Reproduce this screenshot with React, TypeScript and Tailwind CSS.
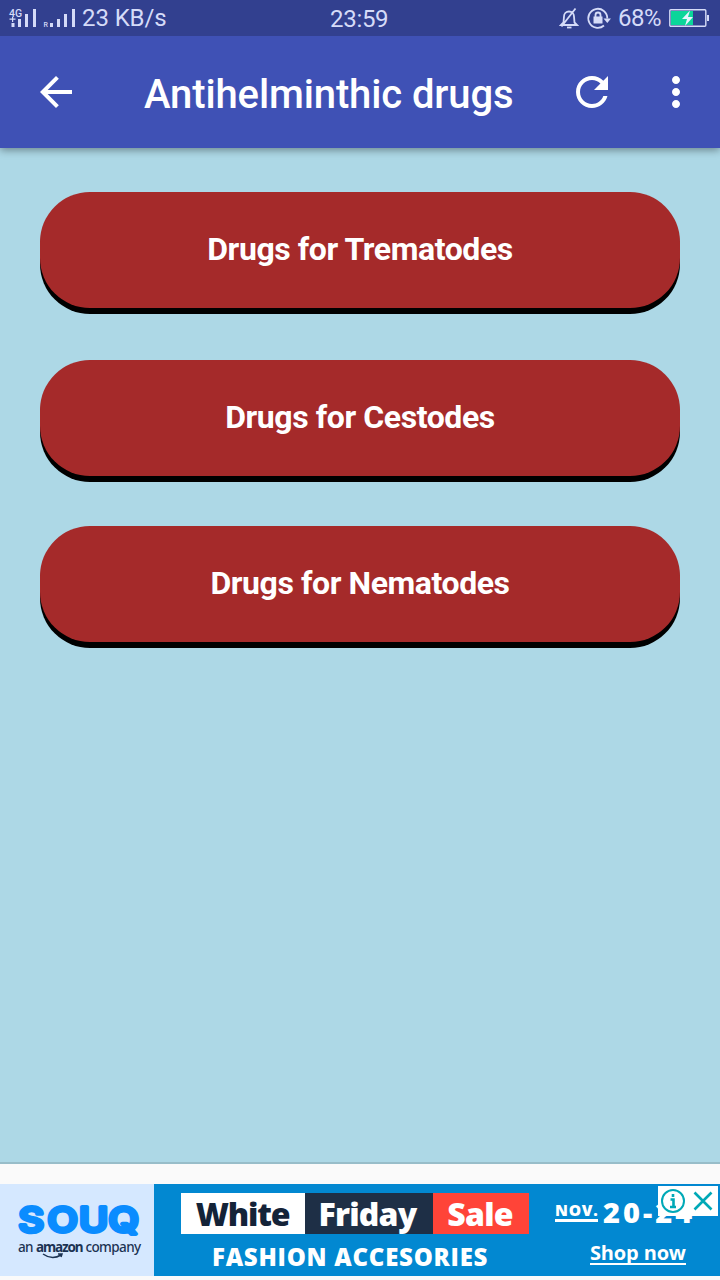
import { ReactNode } from "react";

const drugGroups = [
  { id: "trematodes", label: "Drugs for Trematodes", spacing: "mb-[52px]" },
  { id: "cestodes", label: "Drugs for Cestodes", spacing: "mb-[50px]" },
  { id: "nematodes", label: "Drugs for Nematodes", spacing: "" },
];

function StatusBar() {
  return (
    <div className="relative flex h-9 items-center bg-[#32408f] text-2xl leading-9 text-[#d5dbf8]">
      <svg width="68" height="36" viewBox="0 0 68 36" className="ml-2 shrink-0" fill="currentColor">
        <text x="1" y="16.500" fontSize="10.500" fontWeight="500">4G</text>
        <path d="M1.500 18.500h6v1.200h-6zM4 17h1.200v5h-1.200zM3.500 23h3v4h-3zM10 19h3v8h-3zM17 14h3v13h-3zM25 9h3v18h-3z" />
        <text x="35.500" y="27" fontSize="7" fontWeight="500">R</text>
        <path d="M42 23h3v4h-3zM49 19h3v8h-3zM56 14h3v13h-3zM64 9h3v18h-3z" />
      </svg>
      <span className="ml-1.5 tracking-[-0.1px]">23 KB/s</span>
      <span className="absolute left-[330px] top-px tracking-[-0.3px]">23:59</span>
      <div className="ml-auto flex items-center pr-[11px]">
        <svg width="20" height="24" viewBox="0 0 20 24" fill="none" stroke="currentColor" strokeWidth="1.800">
          <path d="M4.500 16.500l.5-6a5 5 0 0 1 10 0l.5 6 2.500 2.500h-16zM2.500 20.500L16.500 2.500" />
          <path d="M8 21.500h4.500" />
        </svg>
        <svg width="26" height="24" viewBox="0 0 26 24" className="ml-[7px]" fill="none" stroke="currentColor" strokeWidth="1.800">
          <path d="M18 19.500a9.500 9.500 0 1 1 3.300-7" />
          <path d="M17.500 12.500h7.500l-3.700 4.500z" fill="currentColor" stroke="none" />
          <rect x="7.500" y="10.500" width="9" height="7" fill="currentColor" stroke="none" />
          <path d="M9.500 11V9a2.500 2.500 0 0 1 5 0v2" />
        </svg>
        <span className="ml-1.5 tracking-[-0.5px]">68%</span>
        <svg width="40" height="20" viewBox="0 0 40 20" className="ml-2">
          <rect x="0.800" y="1.800" width="36" height="16.400" rx="1" fill="none" stroke="currentColor" strokeWidth="1.400" />
          <rect x="2" y="3" width="22" height="14" fill="#0bd69a" />
          <path d="M21 2.500L13 11h5l-2 7 8-9h-5z" fill="#e6f5ff" />
          <rect x="38" y="7" width="2" height="6" fill="currentColor" />
        </svg>
      </div>
    </div>
  );
}

function ToolbarIcon({ path, label }: { path: string; label: string }) {
  return (
    <button type="button" aria-label={label} className="size-12 shrink-0">
      <svg viewBox="0 0 24 24" className="size-12" fill="currentColor">
        <path d={path} />
      </svg>
    </button>
  );
}

function Toolbar() {
  return (
    <header className="relative flex h-28 items-center bg-[#3f51b5] pl-8 pr-5 text-white shadow-[0_2px_8px_rgba(0,0,0,0.4)] [clip-path:inset(0_0_-20px_0)]">
      <ToolbarIcon label="Back" path="M20 11H7.830l5.590-5.590L12 4l-8 8 8 8 1.410-1.410L7.830 13H20v-2z" />
      <h1 className="ml-16 mt-1.5 whitespace-nowrap text-[40px] font-medium leading-[48px] tracking-[-0.12px]">
        Antihelminthic drugs
      </h1>
      <div className="ml-auto flex gap-9">
        <ToolbarIcon
          label="Refresh"
          path="M17.650 6.350C16.200 4.900 14.210 4 12 4c-4.420 0-7.990 3.580-7.990 8s3.570 8 7.990 8c3.730 0 6.840-2.550 7.730-6h-2.080c-.82 2.330-3.040 4-5.650 4-3.310 0-6-2.690-6-6s2.690-6 6-6c1.660 0 3.140.69 4.220 1.780L13 11h7V4l-2.350 2.350z"
        />
        <ToolbarIcon
          label="More"
          path="M12 8c1.100 0 2-.9 2-2s-.9-2-2-2-2 .9-2 2 .9 2 2 2zm0 2c-1.100 0-2 .9-2 2s.9 2 2 2 2-.9 2-2-.9-2-2-2zm0 6c-1.100 0-2 .9-2 2s.9 2 2 2 2-.9 2-2-.9-2-2-2z"
        />
      </div>
    </header>
  );
}

function DrugButton({ children, className }: { children: ReactNode; className: string }) {
  return (
    <button
      type="button"
      className={`h-[116px] w-full shrink-0 rounded-[50px] bg-[#a52a2a] pb-0.5 text-[32px] font-bold tracking-[-0.42px] text-white shadow-[0_6px_0_#000] ${className}`}
    >
      {children}
    </button>
  );
}

function AdBanner() {
  return (
    <div className="relative flex h-[92px] bg-[#0288d1] font-['Open_Sans',sans-serif] text-white">
      <div className="flex w-[154px] shrink-0 flex-col bg-[#d5e8ff] pl-[18px] pt-4">
        <svg width="124" height="38" viewBox="0 0 124 38" className="shrink-0">
          <text
            transform="scale(1.16 1)"
            x="0.500 25.500 52.500 78"
            y="31.500"
            fontFamily="Inter, sans-serif"
            fontSize="34"
            fontWeight="500"
            fill="#0a8cff"
            stroke="#0a8cff"
            strokeWidth="4"
            strokeLinejoin="round"
          >
            SOUQ
          </text>
        </svg>
        <div className="whitespace-nowrap font-['Noto_Sans',sans-serif] text-[13.500px] font-medium leading-[18px] tracking-[-0.6px] text-[#1c3353]">
          an <b className="tracking-[-1.100px]">amazon</b> company
        </div>
        <svg width="22" height="6" viewBox="0 0 22 6" className="-mt-[3px] ml-6" fill="none" stroke="#1c3353" strokeWidth="1.500">
          <path d="M1 1q9 6.500 18 1M16 1h4l-1 3" />
        </svg>
      </div>
      <div className="ml-[27px] mt-[9px] w-[348px] shrink-0">
        <div className="flex h-[41px] text-[32px] font-extrabold leading-[41px]">
          <div className="w-[124px] bg-white pr-px text-center tracking-[-1.200px] text-[#142338]">White</div>
          <div className="w-[128px] bg-[#1e2f46] pr-[3px] text-center tracking-[-0.8px]">Friday</div>
          <div className="w-[96px] bg-[#ff4438] pr-0.5 text-center tracking-[-0.8px]">Sale</div>
        </div>
        <div className="ml-[31px] mt-[9px] whitespace-nowrap text-2xl font-extrabold leading-7 tracking-[0.75px]">
          FASHION ACCESORIES
        </div>
      </div>
      <div className="ml-[26px] mt-[10px]">
        <div className="flex whitespace-nowrap">
          <span className="mt-2 h-5 w-[43px] border-b-[3px] border-white text-[15.500px] font-extrabold leading-[17px] tracking-[0.7px]">
            NOV.
          </span>
          <span className="ml-[5px] text-[29px] font-extrabold leading-9 tracking-[3px]">20-24</span>
        </div>
        <div className="ml-[35px] mt-[11px] h-6 w-[96px] whitespace-nowrap border-b-2 border-white text-[20px] font-bold leading-[24px] tracking-[-0.15px]">
          Shop now
        </div>
      </div>
      <div className="absolute right-[2px] top-[2px] flex h-[30px] w-[60px] items-center justify-between bg-white px-[3px]">
        <svg width="24" height="24" viewBox="0 0 24 24" fill="none" stroke="#00a9b7" strokeWidth="2">
          <circle cx="12" cy="12" r="11" />
          <path d="M12 5v3M9.500 10.500h3V18M9 18h6" strokeWidth="2.600" />
        </svg>
        <svg width="24" height="24" viewBox="0 0 24 24" stroke="#00a9b7" strokeWidth="2.600">
          <path d="M3.500 3.500l17 17M20.500 3.500l-17 17" />
        </svg>
      </div>
    </div>
  );
}

export default function App() {
  return (
    <div className="flex h-[1280px] w-[720px] flex-col overflow-hidden bg-[#add8e6] font-[Roboto,sans-serif]">
      <StatusBar />
      <Toolbar />
      <main className="flex flex-1 flex-col px-10 pt-11">
        {drugGroups.map((group) => (
          <DrugButton key={group.id} className={group.spacing}>
            {group.label}
          </DrugButton>
        ))}
      </main>
      <footer className="h-[118px] border-t-2 border-[#98bdc9] bg-[#fafafa] pt-5">
        <AdBanner />
      </footer>
    </div>
  );
}
